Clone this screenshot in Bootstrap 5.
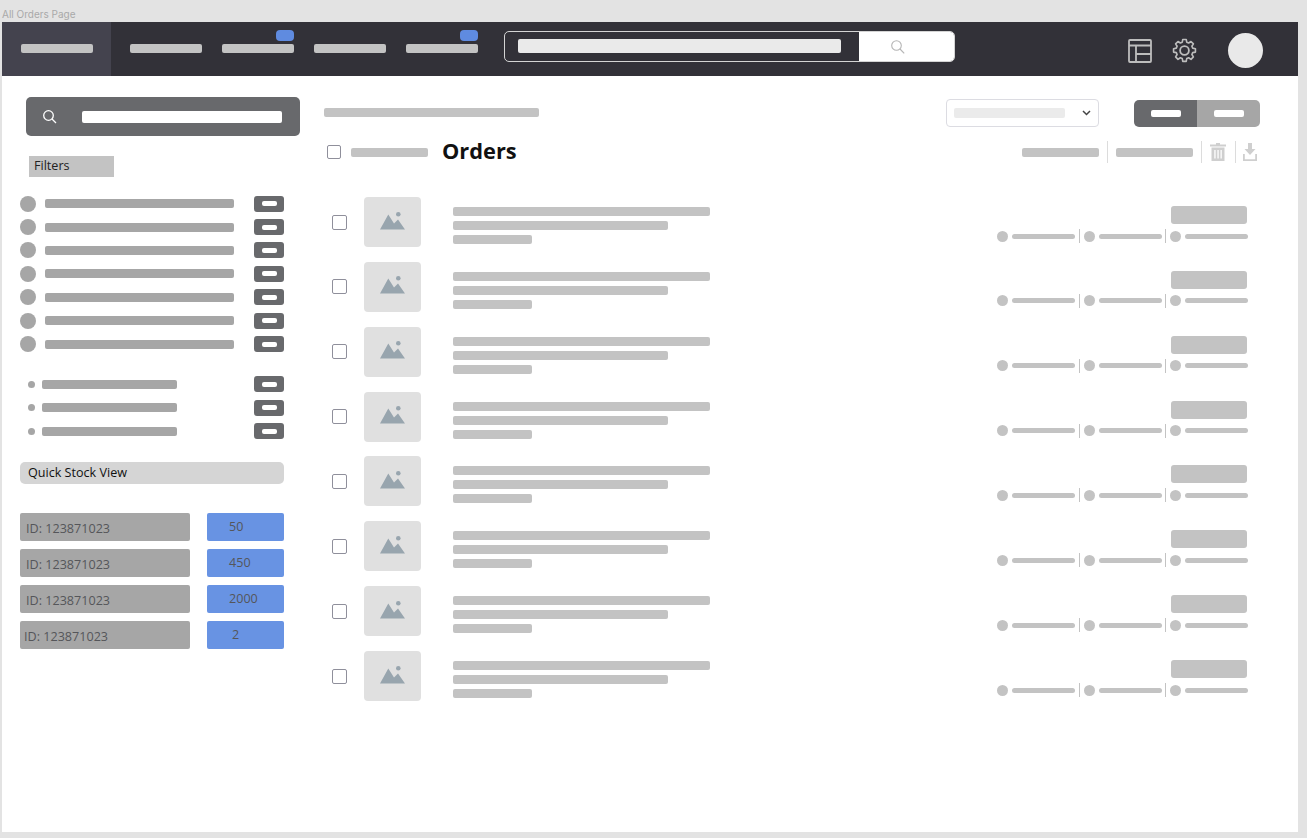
<!DOCTYPE html>
<html lang="en">

<head>
    <meta charset="UTF-8">
    <title>All Orders Page</title>
    <meta name="viewport" content="width=device-width, initial-scale=1" />
    <link href="https://cdn.jsdelivr.net/npm/bootstrap@5.3.0/dist/css/bootstrap.min.css" rel="stylesheet">
    <style>
        body {
            background: #e3e3e3;
            height: 838px;
            overflow: hidden;
            font-family: "Open Sans", "Liberation Sans", sans-serif;
        }

        .page-cap {
            height: 22px;
            padding: 8px 0 0 2px;
            font: 10px/12px Inter, sans-serif;
            color: #a9a9a9;
        }

        .frame {
            width: 1296px;
            height: 810px;
            margin-left: 2px;
            background: #fff;
        }

        .ph {
            display: block;
            flex: none;
            border-radius: 2px;
            background: #c3c3c3;
        }

        /* top bar */
        .topbar {
            height: 54px;
            padding: 0;
            background: #323138;
            flex-wrap: nowrap;
            justify-content: flex-start;
        }

        .brand-box {
            width: 109px;
            height: 54px;
            padding: 22px 0 0 19px;
            background: #44434e;
        }

        .nav-ph {
            width: 72px;
            height: 9px;
        }

        .nav-slot {
            position: relative;
            width: 72px;
            height: 54px;
            padding-top: 22px;
        }

        .nav-pill {
            position: absolute;
            top: 8px;
            right: 0;
            width: 18px;
            height: 11px;
            border-radius: 4px;
            background: #5f8be0;
        }

        .top-links {
            margin-left: 19px;
            gap: 20px;
        }

        .top-search {
            width: 451px;
            height: 31px;
            margin: 9px 0 0 26px;
            border: 1px solid #d4d4d4;
            border-radius: 5px;
            overflow: hidden;
        }

        .top-search-field {
            flex: 1;
            padding: 7px 18px 0 13px;
        }

        .top-search-field .ph {
            height: 14px;
            background: #eaeaea;
        }

        .top-search-btn {
            width: 95px;
            background: #fff;
            padding: 7px 0 0 31px;
        }

        .top-search-btn svg {
            display: block;
        }

        .top-icons {
            margin-left: auto;
            padding: 3px 35px 0 0;
        }

        .gear-icon {
            margin-left: 19px;
        }

        .avatar {
            width: 35px;
            height: 35px;
            margin-left: 30px;
            border-radius: 50%;
            background: #e9e9e9;
        }

        /* left column */
        .side {
            width: 322px;
            flex: none;
            padding: 21px 0 0 18px;
        }

        .side-search {
            width: 274px;
            height: 39px;
            margin-left: 6px;
            padding: 0 18px 0 16px;
            background: #68696c;
            border-radius: 5px;
        }

        .side-search .ph {
            width: 200px;
            height: 12px;
            margin-left: 24px;
            background: #fff;
        }

        .filter-tag {
            width: 85px;
            height: 21px;
            margin: 20px 0 15px 9px;
            padding-left: 5px;
            font-size: 12.6px;
            line-height: 20px;
            color: #222;
            background: #c3c3c3;
        }

        .filter-row {
            height: 23.4px;
        }

        .f-dot {
            width: 16px;
            height: 16px;
            border-radius: 50%;
            background: #a6a6a6;
        }

        .f-line {
            width: 189px;
            height: 9px;
            margin-left: 9px;
            background: #a6a6a6;
        }

        .f-count {
            width: 30px;
            height: 16px;
            margin-left: auto;
            border-radius: 3px;
            background: #68696c;
        }

        .f-count i {
            width: 15px;
            height: 5px;
            border-radius: 2px;
            background: #fff;
        }

        .f-list {
            width: 264px;
        }

        .sub-list {
            margin-top: 17px;
        }

        .s-dot {
            width: 7px;
            height: 7px;
            margin-left: 8px;
            border-radius: 50%;
            background: #a6a6a6;
        }

        .s-line {
            width: 135px;
            height: 9px;
            margin-left: 7px;
            background: #a6a6a6;
        }

        .stock-head {
            width: 264px;
            height: 22px;
            margin-top: 19px;
            padding-left: 8px;
            font-size: 12.6px;
            line-height: 21px;
            color: #111;
            background: #d5d5d5;
            border-radius: 5px;
        }

        .stock-list {
            width: 264px;
            margin-top: 29px;
            gap: 8px;
        }

        .stock-id,
        .stock-qty {
            height: 28px;
            border-radius: 2px;
            font-size: 12.6px;
            line-height: 31px;
            color: #55565a;
        }

        .stock-id {
            width: 170px;
            padding-left: 6px;
            background: #a6a6a6;
        }

        .stock-qty {
            width: 77px;
            padding-left: 22px;
            background: #6893e3;
            line-height: 27px;
        }

        .nudge {
            padding-left: 4px;
        }

        .nudge-q {
            padding-left: 25px;
        }

        /* main column */
        .orders {
            width: 936px;
            flex: none;
        }

        .crumb-row {
            height: 50px;
            padding: 23px 0 0 0;
        }

        .crumb {
            width: 215px;
            height: 9px;
            margin-top: 9px;
        }

        .sort-box {
            width: 153px;
            height: 28px;
            margin-left: auto;
            padding: 0 7px;
            border: 1px solid #dcdce2;
            border-radius: 4px;
        }

        .sort-box .ph {
            width: 111px;
            height: 10px;
            background: #ebebeb;
        }

        .view-toggle {
            width: 126px;
            height: 27px;
            margin: 1px 0 0 35px;
            border-radius: 5px;
            overflow: hidden;
        }

        .view-toggle>div {
            height: 27px;
        }

        .view-on {
            width: 63px;
            background: #68696c;
        }

        .view-off {
            width: 63px;
            background: #a6a6a6;
        }

        .view-toggle .ph {
            width: 30px;
            height: 7px;
            background: #fff;
        }

        .head-row {
            height: 22px;
            padding: 0 3px;
            margin-top: 15px;
        }

        .tick {
            display: block;
            width: 15px;
            height: 15px;
            flex: none;
            border: 1px solid #8f8f9b;
            border-radius: 2px;
            background: #fff;
        }

        .head-row .tick {
            width: 14px;
            height: 14px;
            margin-right: 10px;
        }

        .head-ph {
            width: 77px;
            height: 9px;
        }

        .head-title {
            margin: 0 0 0 14px;
            font-size: 21.8px;
            font-weight: 700;
            line-height: 22px;
            color: #111;
            transform: translateY(-1px);
        }

        .vsep {
            width: 1px;
            height: 22px;
            background: #dcdcdc;
        }

        .trash-icon {
            margin-right: 9px;
        }

        .save-icon {
            margin-left: 7px;
        }

        .order-list {
            margin-top: 34px;
            gap: 14.86px;
        }

        .order-row {
            height: 50px;
            padding-left: 8px;
        }

        .thumb {
            width: 57px;
            height: 50px;
            margin-left: 17px;
            border-radius: 4px;
            background: #e0e0e0;
        }

        .thumb svg {
            margin-bottom: 3px;
        }

        .order-text {
            margin-left: 32px;
            padding-top: 10px;
            gap: 5px;
        }

        .order-text .ph {
            height: 9px;
        }

        .w-a {
            width: 257px;
        }

        .w-b {
            width: 215px;
        }

        .w-c {
            width: 79px;
        }

        .order-right {
            width: 250px;
            margin-left: auto;
            margin-right: 13px;
            padding-top: 9px;
        }

        .price {
            width: 76px;
            height: 18px;
            margin-left: auto;
            border-radius: 3px;
        }

        .meta {
            margin-top: 5px;
            height: 14px;
        }

        .m-dot {
            width: 11px;
            height: 11px;
            flex: none;
            border-radius: 50%;
            background: #c3c3c3;
        }

        .m-line {
            width: 63px;
            height: 5px;
            margin-left: 4px;
            border-radius: 3px;
        }

        .m-sep {
            width: 1px;
            height: 14px;
            flex: none;
            margin: 0 3.75px;
            background: #c3c3c3;
        }
    </style>
</head>

<body>
    <div class="page-cap">All Orders Page</div>

    <div class="frame">
        <nav class="navbar topbar">
            <div class="brand-box"><span class="ph nav-ph"></span></div>

            <div class="d-flex top-links">
                <div class="nav-slot"><span class="ph nav-ph"></span></div>
                <div class="nav-slot"><span class="ph nav-ph"></span><span class="nav-pill"></span></div>
                <div class="nav-slot"><span class="ph nav-ph"></span></div>
                <div class="nav-slot"><span class="ph nav-ph"></span><span class="nav-pill"></span></div>
            </div>

            <div class="d-flex align-self-start top-search">
                <div class="top-search-field"><span class="ph"></span></div>
                <div class="top-search-btn">
                    <svg width="16" height="16" viewBox="0 0 16 16" fill="none" stroke="#b5b5b5" stroke-width="1.1">
                        <circle cx="6.5" cy="6.5" r="4.8" />
                        <path d="M10 10l4.2 4.4" />
                    </svg>
                </div>
            </div>

            <div class="d-flex align-items-center top-icons">
                <svg width="24" height="24" viewBox="0 0 24 24" fill="none" stroke="#bdbdbd" stroke-width="1.8">
                    <rect x="1" y="1" width="22" height="22" rx="1" />
                    <path d="M1 6.500h22M8 6.500v16.500M8 15h15" />
                </svg>
                <svg class="gear-icon" width="27" height="27" viewBox="0 0 24 24" fill="none" stroke="#bdbdbd" stroke-width="1.6" stroke-linejoin="round">
                    <circle cx="12" cy="12" r="3.900" />
                    <path d="M10.3 2.500h3.400l.5 2.700 1.900.8 2.300-1.500 2.400 2.400-1.500 2.300.8 1.900 2.700.5v3.400l-2.700.5-.8 1.900 1.500 2.300-2.400 2.400-2.300-1.500-1.900.8-.5 2.700h-3.400l-.5-2.700-1.900-.8-2.300 1.500-2.400-2.400 1.500-2.300-.8-1.900-2.700-.5v-3.400l2.700-.5.8-1.900-1.500-2.300 2.400-2.400 2.300 1.500 1.900-.8z" transform="translate(12 12) scale(.9) translate(-12 -13.400)" />
                </svg>
                <span class="avatar"></span>
            </div>
        </nav>

        <div class="d-flex">
            <aside class="side">
                <div class="d-flex align-items-center side-search">
                    <svg width="16" height="16" viewBox="0 0 16 16" fill="none" stroke="#fff" stroke-width="1.3">
                        <circle cx="6.500" cy="6.500" r="4.800" />
                        <path d="M10 10l4 4" />
                    </svg>
                    <span class="ph"></span>
                </div>

                <div class="filter-tag">Filters</div>

                <div class="f-list" id="filterList"></div>
                <div class="f-list sub-list" id="subList"></div>

                <div class="stock-head">Quick Stock View</div>

                <div class="d-flex flex-column stock-list">
                    <div class="d-flex justify-content-between">
                        <div class="stock-id">ID: 123871023</div>
                        <div class="stock-qty">50</div>
                    </div>
                    <div class="d-flex justify-content-between">
                        <div class="stock-id">ID: 123871023</div>
                        <div class="stock-qty">450</div>
                    </div>
                    <div class="d-flex justify-content-between">
                        <div class="stock-id">ID: 123871023</div>
                        <div class="stock-qty">2000</div>
                    </div>
                    <div class="d-flex justify-content-between">
                        <div class="stock-id nudge">ID: 123871023</div>
                        <div class="stock-qty nudge-q">2</div>
                    </div>
                </div>
            </aside>

            <main class="orders">
                <div class="d-flex crumb-row">
                    <span class="ph crumb"></span>
                    <div class="d-flex align-items-center justify-content-between sort-box">
                        <span class="ph"></span>
                        <svg width="9" height="6" viewBox="0 0 9 6" fill="none" stroke="#444" stroke-width="1.500">
                            <path d="M1 1l3.500 3.500L8 1" />
                        </svg>
                    </div>
                    <div class="d-flex view-toggle">
                        <div class="d-flex align-items-center justify-content-center view-on"><span class="ph"></span></div>
                        <div class="d-flex align-items-center justify-content-center view-off"><span class="ph"></span></div>
                    </div>
                </div>

                <div class="d-flex align-items-center head-row">
                    <span class="tick"></span>
                    <span class="ph head-ph"></span>
                    <h1 class="head-title">Orders</h1>
                    <span class="ph head-ph ms-auto"></span>
                    <span class="vsep mx-2"></span>
                    <span class="ph head-ph"></span>
                    <span class="vsep mx-2"></span>
                    <svg class="trash-icon" width="16" height="18" viewBox="0 0 16 18" fill="#cfcfcf">
                        <path d="M6 0h4v1.500h6V3.500H0V1.500h6zM1.500 4.500h13V18h-13zM4.300 7v8.500h1.300V7zM7.400 7v8.500h1.300V7zM10.500 7v8.500h1.300V7z" fill-rule="evenodd" />
                    </svg>
                    <span class="vsep"></span>
                    <svg class="save-icon" width="14" height="18" viewBox="0 0 14 18" fill="#cfcfcf">
                        <path d="M5 0h4v6h3.500L7 12 1.500 6H5z" />
                        <path d="M0 11h1.800v5.200h10.400V11H14v7H0z" />
                    </svg>
                </div>

                <div class="d-flex flex-column order-list" id="orderList"></div>
            </main>
        </div>
    </div>

    <script src="https://cdn.jsdelivr.net/npm/bootstrap@5.3.0/dist/js/bootstrap.bundle.min.js"></script>
    <script>
        const countBadge = '<span class="d-flex align-items-center justify-content-center f-count"><i></i></span>';
        const mountain = `<svg width="25" height="18" viewBox="0 0 25 18" fill="#98a5ae">
            <circle cx="18.300" cy="2.300" r="2.300" />
            <path d="M0 17.500L8.300 2.500 14 11.500 18 7.500 25 17.500z" />
        </svg>`;

        function repeat(n, html) {
            return Array(n).fill(html).join("");
        }

        document.getElementById("filterList").innerHTML = repeat(7,
            `<div class="d-flex align-items-center filter-row"><span class="f-dot"></span><span class="ph f-line"></span>${countBadge}</div>`);

        document.getElementById("subList").innerHTML = repeat(3,
            `<div class="d-flex align-items-center filter-row"><span class="s-dot"></span><span class="ph s-line"></span>${countBadge}</div>`);

        const metaItem = '<span class="m-dot"></span><span class="ph m-line"></span>';

        document.getElementById("orderList").innerHTML = repeat(8, `
            <div class="d-flex order-row">
                <span class="tick align-self-center"></span>
                <div class="d-flex align-items-center justify-content-center thumb">${mountain}</div>
                <div class="d-flex flex-column order-text">
                    <span class="ph w-a"></span>
                    <span class="ph w-b"></span>
                    <span class="ph w-c"></span>
                </div>
                <div class="order-right">
                    <span class="ph price"></span>
                    <div class="d-flex align-items-center meta">
                        ${metaItem}<span class="m-sep"></span>${metaItem}<span class="m-sep"></span>${metaItem}
                    </div>
                </div>
            </div>`);
    </script>
</body>

</html>
